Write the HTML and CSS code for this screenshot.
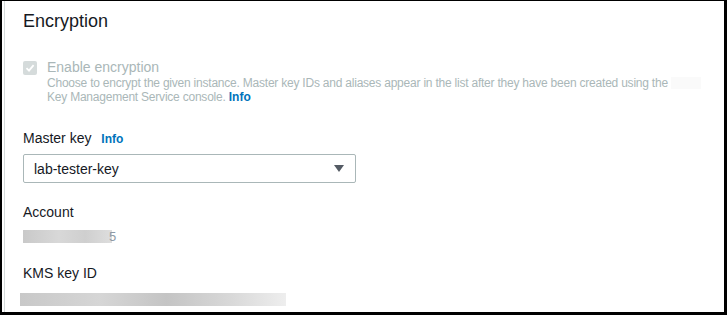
FILE: index.html
```html
<!DOCTYPE html>
<html lang="en">
<head>
  <meta charset="UTF-8" />
  <title>Encryption</title>
  <link rel="stylesheet" href="styles.css">
</head>
<body>
  <div class="frame">
    <div class="panel">
      <h2>Encryption</h2>

      <div class="check-row">
        <span class="checkbox">
          <svg width="10" height="10" viewBox="0 0 10 10"><path d="M1.5 5.2 L4 7.6 L8.6 2.2" fill="none" stroke="#fff" stroke-width="1.8"/></svg>
        </span>
        <div>
          <div class="check-label">Enable encryption</div>
          <div class="check-desc">Choose to encrypt the given instance. Master key IDs and aliases appear in the list after they have been created using the <span class="mask"></span><br>Key Management Service console. <a class="info">Info</a></div>
        </div>
      </div>

      <div class="field first">
        <div class="label">Master key <a class="info">Info</a></div>
        <div class="select">
          <span>lab-tester-key</span>
          <span class="caret"></span>
        </div>
      </div>

      <div class="field">
        <div class="label">Account</div>
        <div class="value"><span class="blur short"></span><span class="peek">5</span></div>
      </div>

      <div class="field last">
        <div class="label">KMS key ID</div>
        <div class="value"><span class="blur long"></span></div>
      </div>
    </div>
  </div>
</body>
</html>
```

FILE: styles.css
```css
html, body {
  margin: 0;
  height: 100%;
}
body {
  font-family: "Liberation Sans", Arial, sans-serif;
  background: #fff;
  color: #16191f;
}
.frame {
  box-sizing: border-box;
  height: 315px;
  border-style: solid;
  border-color: #000;
  border-width: 1px 3px 3px 2px;
  padding-left: 2px;
  overflow: hidden;
}
.panel {
  height: 100%;
  border-left: 1px solid #d5dbdb;
  padding: 0 0 0 18px;
}
h2 {
  margin: 0;
  padding-top: 9px;
  font-size: 18px;
  font-weight: normal;
  line-height: 22px;
}
.check-row {
  display: flex;
  gap: 10px;
  margin-top: 27px;
}
.checkbox {
  width: 14px;
  height: 14px;
  margin-top: 2px;
  border-radius: 2px;
  background: #d5dbdb;
  display: flex;
  align-items: center;
  justify-content: center;
}
.check-label {
  font-size: 14px;
  line-height: 17px;
  color: #aab7b8;
}
.check-desc {
  font-size: 12px;
  line-height: 14px;
  color: #aab7b8;
  letter-spacing: -0.22px;
  white-space: nowrap;
}
.mask {
  display: inline-block;
  width: 30px;
  height: 12px;
  vertical-align: -2px;
  background: #fafafa;
}
.info {
  font-weight: bold;
  color: #0073bb;
  font-size: 12px;
  letter-spacing: 0;
}
.field {
  margin-top: 21px;
}
.field.first {
  margin-top: 26px;
}
.field.last {
  margin-top: 22px;
}
.label {
  font-size: 14px;
  line-height: 17px;
}
.label .info {
  margin-left: 6px;
}
.select {
  box-sizing: border-box;
  width: 333px;
  height: 29px;
  margin-top: 6px;
  border: 1px solid #aab7b8;
  border-radius: 2px;
  padding: 0 11px 0 10px;
  display: flex;
  align-items: center;
  justify-content: space-between;
  font-size: 14px;
}
.caret {
  width: 0;
  height: 0;
  border-left: 5px solid transparent;
  border-right: 5px solid transparent;
  border-top: 7px solid #545b64;
}
.value {
  display: flex;
  align-items: center;
  margin-top: 9px;
  height: 13px;
}
.field.last .value {
  margin-top: 11px;
}
.blur {
  display: inline-block;
  height: 13px;
  background: linear-gradient(90deg, #c9c9c9, #d8d8d8 40%, #cfcfcf 70%, #dedede);
}
.blur.short {
  width: 89px;
}
.peek {
  font-size: 13px;
  line-height: 13px;
  color: #8d9aa6;
  margin-left: -3px;
}
.blur.long {
  width: 266px;
  margin-left: -3px;
  background: linear-gradient(90deg, #c8c8c8, #d6d6d6 30%, #c4c4c4 55%, #d9d9d9 80%, #eeeeee);
}
```
